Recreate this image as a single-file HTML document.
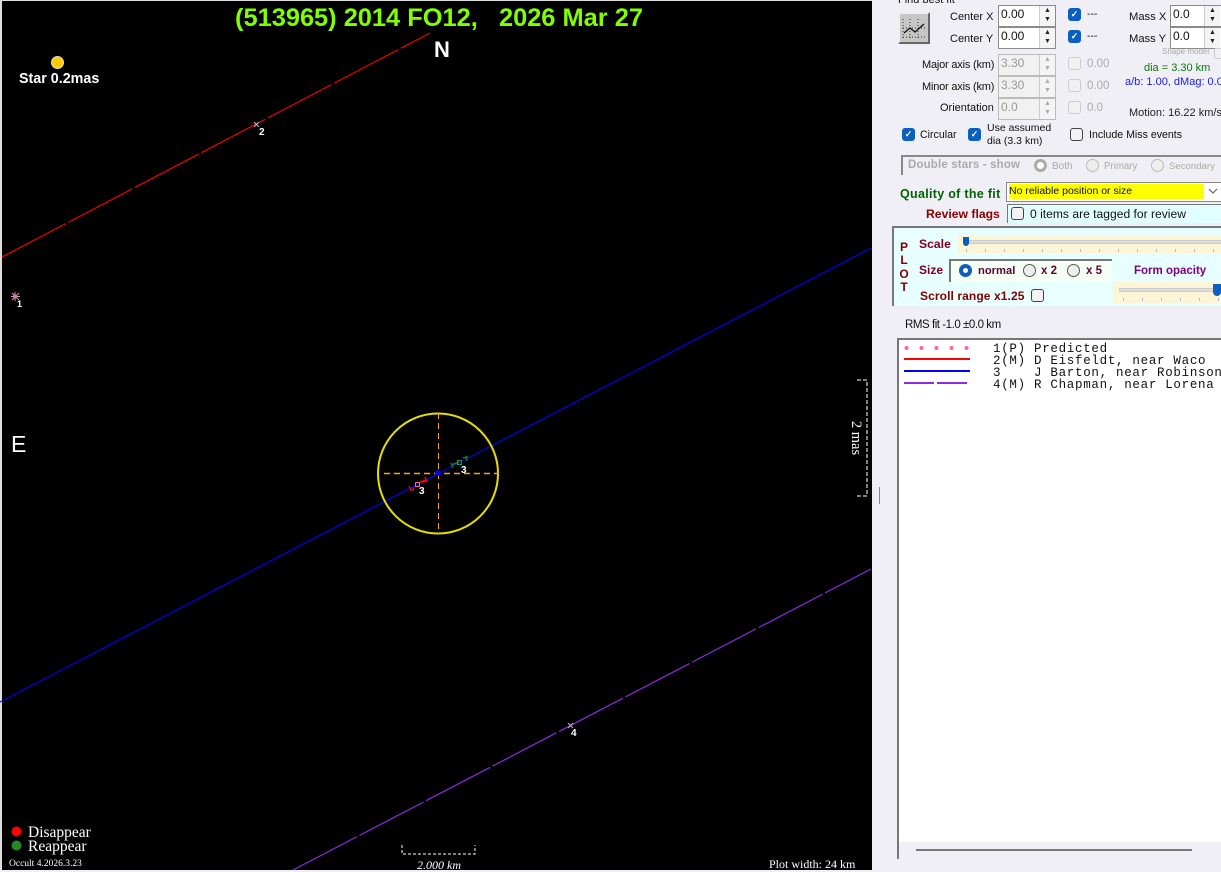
<!DOCTYPE html>
<html><head><meta charset="utf-8">
<style>
html,body{margin:0;padding:0;width:1221px;height:870px;overflow:hidden;background:#f0eff5}
*{box-sizing:border-box}
.a{position:absolute;white-space:nowrap}
#side{position:absolute;left:0;top:0;width:1221px;height:870px;overflow:hidden}
#side,.s{font-family:"Liberation Sans",sans-serif;font-size:12px;color:#111}
.n{position:absolute;width:58px;height:22px;background:#fff;border:1px solid #8a8a8a;font:12px "Liberation Sans",sans-serif;padding:1px 0 0 2px;color:#111}
.n i{position:absolute;right:0;top:0;width:16px;height:20px;font:normal 7px/9px "Liberation Sans",sans-serif;text-align:center;color:#222;background:#f4f4f4;border-left:1px solid #ccc}
.n.d{background:#f1f1f1;color:#999;border-color:#bbb}.n.d i{color:#aaa}
.c{position:absolute;width:13px;height:13px;border:1px solid #444;border-radius:3px;background:#f2f2f2}
.c.on{background:#0b5fc0;border-color:#0b5fc0;color:#fff;font:bold 9px/11px "Liberation Sans",sans-serif;text-align:center}
.c.d{border-color:#ccc;background:#f1f1f1}
.r{position:absolute;width:13px;height:13px;border:1px solid #555;border-radius:50%;background:#eee}
.r.on{border:4px solid #0b5fc0;background:#fff}
.r.d{border-color:#bbb}
.b{font-weight:bold}
.tk{position:absolute;height:3px;background:repeating-linear-gradient(90deg,#bbb 0 1px,transparent 1px 19px)}
</style></head><body>
<div class="a" style="left:0;top:0;width:872px;height:870px;background:#000;border-left:2px solid #ddd;border-top:1px solid #ddd"></div>
<svg class="a" style="left:0;top:0" width="872" height="870" viewBox="0 0 872 870">
<g fill="none">
<line x1="2" y1="257" x2="430" y2="33" stroke="#f00000" stroke-width="1.200" stroke-dasharray="72 3"/>
<line x1="0" y1="702" x2="871" y2="248" stroke="#0000f0" stroke-width="1.200"/>
<line x1="293" y1="870" x2="871" y2="569" stroke="#8a2be2" stroke-width="1.200" stroke-dasharray="72 3"/>
<circle cx="438" cy="473.500" r="60" stroke="#e6e000" stroke-width="2"/>
<path d="M438.500 413V534" stroke="#ffa500" stroke-dasharray="6 4"/>
<path d="M384 473.500H499" stroke="#ffa500" stroke-width="1.400" stroke-dasharray="6 4"/>
<path d="M410 490l4-1M414 487l-1 4M409 486l2 4" stroke="#f00" stroke-width="1.300"/>
<path d="M420 482l6-2M422 482l5-1M425 477l2 5" stroke="#f00" stroke-width="1.500"/>
<rect x="415.500" y="482.500" width="4" height="4" stroke="#f66"/>
<path d="M451 465l8-3M451 463l2 5" stroke="#187a18" stroke-width="1.500"/>
<rect x="457.500" y="460.500" width="4" height="4" stroke="#1c9c1c"/>
<path d="M463 458l5-1M466 456l1 5" stroke="#187a18" stroke-width="1.500"/>
<path d="M254 122l5 5M259 122l-5 5M568 723l5 5M573 723l-5 5" stroke="#bbb"/>
<path d="M15 292v9M11 296.500h9M12 293l7 7M19 293l-7 7" stroke="#aaa"/>
<path d="M402 845v9h73v-9" stroke="#fff" stroke-dasharray="3 2"/>
<path d="M857 380h10v116h-10" stroke="#fff" stroke-dasharray="4 2"/>
</g>
<circle cx="15" cy="296.500" r="2" fill="#ff60b0"/>
<circle cx="438" cy="473" r="3" fill="#0000ff"/>
<circle cx="57.500" cy="62.500" r="6" fill="#ffcc00" stroke="#ddd"/>
<circle cx="16.500" cy="831.500" r="5" fill="#ff0000"/>
<circle cx="16.500" cy="845.500" r="5" fill="#228b22"/>
</svg>
<div class="a s b" style="left:235px;top:3px;font-size:25.400px;line-height:30px;color:#7fff00;white-space:pre">(513965) 2014 FO12,   2026 Mar 27</div>
<div class="a s b" style="left:434px;top:37px;font-size:22px;line-height:26px;color:#fff">N</div>
<div class="a s" style="left:11px;top:431px;font-size:23px;line-height:26px;color:#fff">E</div>
<div class="a s b" style="left:19px;top:72px;font-size:14.300px;line-height:15px;color:#fff">Star 0.2mas</div>
<div class="a s b" style="left:17px;top:299px;font-size:9px;color:#fff">1</div>
<div class="a s b" style="left:259px;top:127px;font-size:10px;color:#fff">2</div>
<div class="a s b" style="left:419px;top:486px;font-size:10px;color:#fff">3</div>
<div class="a s b" style="left:461px;top:465px;font-size:10px;color:#fff">3</div>
<div class="a s b" style="left:571px;top:728px;font-size:10px;color:#fff">4</div>
<div class="a" style="left:28px;top:825px;font:15.500px/15px 'Liberation Serif',serif;color:#fff">Disappear</div>
<div class="a" style="left:28px;top:839px;font:15.500px/15px 'Liberation Serif',serif;color:#fff">Reappear</div>
<div class="a" style="left:9px;top:858px;font:9.500px/12px 'Liberation Serif',serif;color:#fff">Occult 4.2026.3.23</div>
<div class="a" style="left:417px;top:858px;font:italic 12px/14px 'Liberation Serif',serif;color:#fff">2.000 km</div>
<div class="a" style="left:769px;top:857px;font:12px/14px 'Liberation Serif',serif;color:#fff">Plot width: 24 km</div>
<div class="a" style="left:826px;top:431px;width:60px;text-align:center;transform:rotate(90deg);font:14.500px/14px 'Liberation Serif',serif;color:#fff">2 mas</div>

<div id="side">
<div class="a" style="left:879px;top:487px;width:1px;height:17px;background:#888"></div>
<div class="a" style="left:898px;top:-6px;font-size:11px;line-height:13px">Find best fit</div>
<div class="a" style="left:898px;top:12px;width:32px;height:32px;background:#c6c6c6;border:2px solid;border-color:#eee #666 #666 #eee">
<svg width="28" height="28" style="display:block"><path d="M3 5v19M3 23h22M3 14h22M10 5v19M18 5v19" stroke="#333" stroke-dasharray="1 2" fill="none"/><path d="M4 19l6-5 5 4 9-8" stroke="#111" stroke-width="1.300" fill="none"/></svg></div>
<div class="a" style="left:950px;top:10px;font-size:11px;line-height:14px">Center X</div><div class="a" style="left:950px;top:32px;font-size:11px;line-height:14px">Center Y</div>
<div class="n" style="left:998px;top:5px">0.00<i>▲<br>▼</i></div><div class="n" style="left:998px;top:27px">0.00<i>▲<br>▼</i></div>
<div class="c on" style="left:1068px;top:8px">✓</div><div class="a" style="left:1087px;top:8px;font-size:10.500px">---</div>
<div class="c on" style="left:1068px;top:30px">✓</div><div class="a" style="left:1087px;top:30px;font-size:10.500px">---</div>
<div class="a" style="left:1129px;top:10px;font-size:11.200px;line-height:14px">Mass X</div><div class="a" style="left:1129px;top:32px;font-size:11.200px;line-height:14px">Mass Y</div>
<div class="n" style="left:1170px;top:5px;width:60px">0.0<i style="right:9px">▲<br>▼</i></div><div class="n" style="left:1170px;top:27px;width:60px">0.0<i style="right:9px">▲<br>▼</i></div>
<div class="a" style="left:1162px;top:47px;font-size:8px;color:#aaa">Shape model</div>
<div class="a" style="left:1214px;top:48px;width:10px;height:11px;border:1px solid #ccc;border-radius:2px"></div>
<div class="a" style="left:922px;top:59px;font-size:11px;letter-spacing:-.2px">Major axis (km)</div>
<div class="a" style="left:922px;top:81px;font-size:11px;letter-spacing:-.2px">Minor axis (km)</div>
<div class="a" style="left:940px;top:102px;font-size:11px">Orientation</div>
<div class="n d" style="left:998px;top:54px">3.30<i>▲<br>▼</i></div><div class="n d" style="left:998px;top:76px">3.30<i>▲<br>▼</i></div><div class="n d" style="left:998px;top:98px">0.0<i>▲<br>▼</i></div>
<div class="c d" style="left:1068px;top:57px"></div><div class="a" style="left:1087px;top:58px;color:#aaa;font-size:11.500px">0.00</div>
<div class="c d" style="left:1068px;top:79px"></div><div class="a" style="left:1087px;top:80px;color:#aaa;font-size:11.500px">0.00</div>
<div class="c d" style="left:1068px;top:101px"></div><div class="a" style="left:1087px;top:102px;color:#aaa;font-size:11.500px">0.0</div>
<div class="a" style="left:1144px;top:62px;font-size:11px;color:#0a7a0a">dia = 3.30 km</div>
<div class="a" style="left:1125px;top:76px;font-size:11px;color:#2020e0">a/b: 1.00, dMag: 0.0</div>
<div class="a" style="left:1129px;top:107px;font-size:11px;color:#222">Motion: 16.22 km/s</div>
<div class="c on" style="left:902px;top:128px">✓</div><div class="a" style="left:920px;top:129px;font-size:10.600px">Circular</div>
<div class="c on" style="left:968px;top:128px">✓</div><div class="a" style="left:987px;top:122px;font-size:10.500px;line-height:13px">Use assumed<br>dia (3.3 km)</div>
<div class="c" style="left:1070px;top:128px"></div><div class="a" style="left:1089px;top:129px;font-size:10.600px">Include Miss events</div>

<div class="a" style="left:901px;top:155px;width:330px;height:20px;border-top:2px solid #888;border-left:2px solid #888"></div>
<div class="a b" style="left:908px;top:159px;font-size:11.500px;letter-spacing:.15px;color:#aaa">Double stars - show</div>
<div class="r on" style="left:1034px;top:159px;border-color:#aaa;border-width:3px"></div><div class="a" style="left:1052px;top:161px;font-size:10px;color:#aaa">Both</div>
<div class="r d" style="left:1086px;top:159px"></div><div class="a" style="left:1104px;top:161px;font-size:9.700px;color:#aaa">Primary</div>
<div class="r d" style="left:1151px;top:159px"></div><div class="a" style="left:1169px;top:161px;font-size:9.600px;color:#aaa">Secondary</div>

<div class="a b" style="left:900px;top:187px;color:#006400;font-size:12.500px;letter-spacing:.3px">Quality of the fit</div>
<div class="a" style="left:1006px;top:182px;width:220px;height:20px;background:#fff;border:1px solid #888"></div>
<div class="a" style="left:1009px;top:184px;width:195px;height:15px;background:#ff0;font-size:10.500px;line-height:15px;color:#111">No reliable position or size</div>
<svg class="a" style="left:1208px;top:188px" width="11" height="8"><path d="M1 1l4 4 4-4" fill="none" stroke="#555"/></svg>
<div class="a b" style="left:926px;top:207px;color:#8b0000;font-size:12.200px;line-height:14px">Review flags</div>
<div class="a" style="left:1007px;top:204px;width:220px;height:19px;background:#e2ffff;border-top:1px solid #777;border-left:1px solid #777"></div>
<div class="c" style="left:1011px;top:207px"></div><div class="a" style="left:1030px;top:207px;font-size:12.100px">0 items are tagged for review</div>

<div class="a" style="left:892px;top:226px;width:340px;height:80px;background:#e8ffff;border-top:2px solid #777;border-left:2px solid #777"></div>
<div class="a b" style="left:899px;top:241px;width:10px;font-size:12px;line-height:13.300px;color:#800000;text-align:center;white-space:normal">P<br>L<br>O<br>T</div>
<div class="a b" style="left:919px;top:237px;color:#800020;font-size:12.200px;line-height:14px">Scale</div>
<div class="a" style="left:958px;top:235px;width:270px;height:18px;background:#fdf5d8"></div>
<div class="a" style="left:964px;top:240px;width:260px;height:4px;background:#ddd;border:1px solid #ccc"></div>
<div class="tk" style="left:966px;top:249px;width:255px"></div>
<div class="a" style="left:963px;top:237px;width:6px;height:9px;background:#0b5fc0;border-radius:0 0 3px 3px"></div>
<div class="a b" style="left:919px;top:263px;color:#800020;font-size:12px;line-height:14px">Size</div>
<div class="a" style="left:949px;top:259px;width:163px;height:23px;background:#f5fff5;border-top:2px solid #777;border-left:2px solid #777"></div>
<div class="r on" style="left:959px;top:264px"></div><div class="a b" style="left:978px;top:264px;color:#600030;font-size:11.200px;line-height:14px">normal</div>
<div class="r" style="left:1023px;top:264px"></div><div class="a b" style="left:1041px;top:264px;color:#600030;font-size:11.500px;line-height:14px">x 2</div>
<div class="r" style="left:1067px;top:264px"></div><div class="a b" style="left:1086px;top:264px;color:#600030;font-size:11.500px;line-height:14px">x 5</div>
<div class="a b" style="left:1134px;top:264px;color:#800080;font-size:11.500px;line-height:14px">Form opacity</div>
<div class="a b" style="left:920px;top:289px;color:#800000;font-size:12px;letter-spacing:.1px;line-height:14px">Scroll range x1.25</div>
<div class="c" style="left:1031px;top:289px"></div>
<div class="a" style="left:1113px;top:282px;width:110px;height:21px;background:#fdf5d8"></div>
<div class="a" style="left:1119px;top:288px;width:100px;height:4px;background:#ddd;border:1px solid #ccc"></div>
<div class="tk" style="left:1123px;top:298px;width:98px"></div>
<div class="a" style="left:1213px;top:284px;width:8px;height:12px;background:#0b5fc0;border-radius:0 0 4px 4px"></div>

<div class="a" style="left:905px;top:318px;font-size:11.500px;letter-spacing:-.45px;line-height:14px">RMS fit -1.0 ±0.0 km</div>
<div class="a" style="left:897px;top:338px;width:330px;height:521px;background:#fff;border-top:2px solid #777;border-left:2px solid #777"></div>
<div class="a" style="left:899px;top:842px;width:330px;height:17px;background:#f0eff5"></div>
<div class="a" style="left:916px;top:849px;width:276px;height:2px;background:#777"></div>
<svg class="a" style="left:900px;top:342px" width="75" height="48"><g fill="none" stroke-width="2"><circle cx="6.500" cy="6" r="2" fill="#ff60b0" stroke="none"/><circle cx="21.500" cy="6" r="2" fill="#ff60b0" stroke="none"/><circle cx="36.500" cy="6" r="2" fill="#ff60b0" stroke="none"/><circle cx="51.500" cy="6" r="2" fill="#ff60b0" stroke="none"/><circle cx="66.500" cy="6" r="2" fill="#ff60b0" stroke="none"/><path d="M4 17h66" stroke="#f00"/><path d="M4 29h66" stroke="#00f"/><path d="M4 41h30M37 41h30" stroke="#8a2be2"/></g></svg>
<pre class="a" style="left:993px;top:343px;margin:0;white-space:pre;font:12.500px/12px 'Liberation Mono',monospace;letter-spacing:.7px;color:#111">1(P) Predicted
2(M) D Eisfeldt, near Waco
3    J Barton, near Robinson
4(M) R Chapman, near Lorena</pre>
</div>
</body></html>
